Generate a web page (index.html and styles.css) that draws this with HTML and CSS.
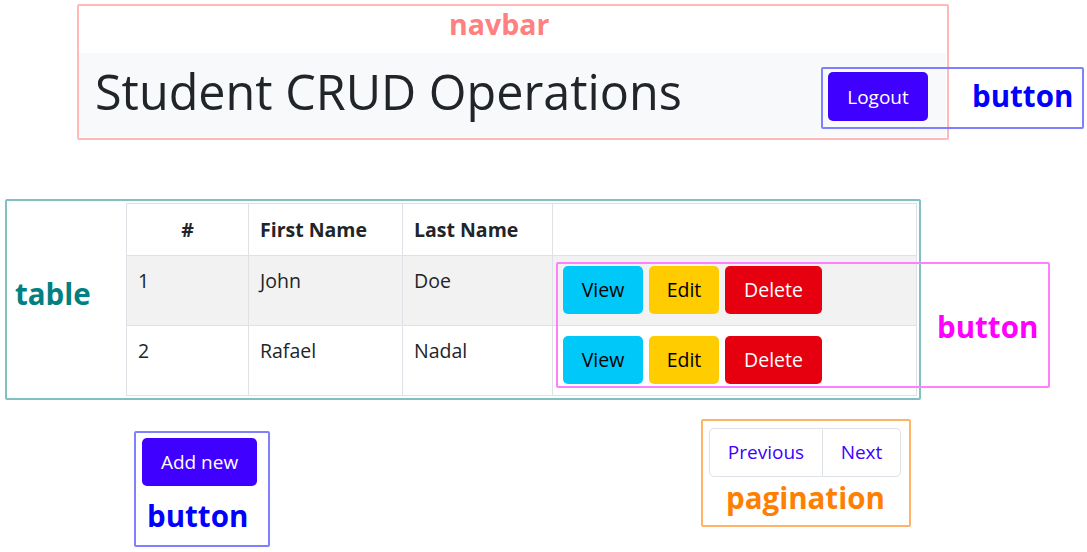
FILE: index.html
```html
<!DOCTYPE html>
<html>
<head>
<meta charset="utf-8">
<link rel="stylesheet" href="styles.css">
</head>
<body>
<div class="page">
  <header class="navbar">
    <h1 class="title">Student CRUD Operations</h1>
    <button class="btn btn-primary btn-logout">Logout</button>
  </header>

  <section class="table-wrap">
    <table class="table">
      <thead>
        <tr><th class="c-num">#</th><th class="c-first">First Name</th><th class="c-last">Last Name</th><th class="c-act"></th></tr>
      </thead>
      <tbody>
        <tr class="striped">
          <td>1</td><td>John</td><td>Doe</td>
          <td><div class="actions"><button class="btn btn-info">View</button><button class="btn btn-warning">Edit</button><button class="btn btn-danger">Delete</button></div></td>
        </tr>
        <tr>
          <td>2</td><td>Rafael</td><td>Nadal</td>
          <td><div class="actions"><button class="btn btn-info">View</button><button class="btn btn-warning">Edit</button><button class="btn btn-danger">Delete</button></div></td>
        </tr>
      </tbody>
    </table>
  </section>

  <section class="bottom">
    <button class="btn btn-primary btn-add">Add new</button>
    <nav class="pagination">
      <a class="page-link">Previous</a>
      <a class="page-link">Next</a>
    </nav>
  </section>
</div>

<div class="anno anno-navbar"><span class="anno-label lbl-navbar">navbar</span></div>
<div class="anno anno-logout"><span class="anno-label lbl-logout">button</span></div>
<div class="anno anno-table"><span class="anno-label lbl-table">table</span></div>
<div class="anno anno-actions"><span class="anno-label lbl-actions">button</span></div>
<div class="anno anno-add"><span class="anno-label lbl-add">button</span></div>
<div class="anno anno-pag"><span class="anno-label lbl-pag">pagination</span></div>
</body>
</html>
```

FILE: styles.css
```css
* { box-sizing: border-box; }
html, body { margin: 0; padding: 0; background: #fff; }
body {
  font-family: "Open Sans", "Noto Sans", "DejaVu Sans", sans-serif;
  color: #212529;
  width: 1087px;
  height: 552px;
  overflow: hidden;
  position: relative;
}
.page { padding-top: 53px; }

.navbar {
  margin-left: 79px;
  width: 867px;
  height: 84px;
  background: #f8f9fa;
  display: flex;
  align-items: center;
  justify-content: space-between;
  padding: 0 18px 0 16px;
}
.title {
  margin: 0 0 8px 0;
  font-weight: 400;
  font-size: 48.5px;
  line-height: 1.2;
  color: #212529;
}

.btn {
  font-family: inherit;
  border: none;
  border-radius: 5px;
  font-size: 19px;
  line-height: 28px;
  cursor: pointer;
  padding: 10px 0;
  text-align: center;
}
.btn-primary { background: #4000ff; color: #fff; }
.btn-logout { width: 100px; height: 49px; margin-top: 3px; }
.btn-info { background: #00c8f8; color: #000; width: 80px; }
.btn-warning { background: #ffcc00; color: #000; width: 70px; }
.btn-danger { background: #e6000f; color: #fff; width: 97px; }

.table-wrap { margin-top: 66px; margin-left: 126px; }
.table {
  width: 791px;
  border-collapse: collapse;
  font-size: 19.5px;
}
.table th, .table td {
  border: 1px solid #dee2e6;
  padding: 11px 11px;
  line-height: 28px;
  text-align: left;
  vertical-align: top;
}
.table th { font-weight: 700; height: 52px; vertical-align: middle; }
.table td { height: 70px; }
.table th.c-num { text-align: center; }
.c-num { width: 122px; }
.c-first { width: 154px; }
.c-last { width: 150px; }
.striped td { background: #f2f2f2; }
.table td:last-child { padding: 10px 10px; }
.actions { display: flex; gap: 6px; }
.actions .btn { height: 48px; font-size: 19.5px; }

.bottom {
  display: flex;
  align-items: flex-start;
  margin-top: 32px;
  padding-left: 142px;
}
.btn-add { width: 115px; height: 48px; margin-top: 10px; }
.pagination {
  margin-left: 452px;
  display: flex;
  border: 1px solid #dee2e6;
  border-radius: 5px;
  height: 49px;
}
.page-link {
  color: #4000ff;
  font-size: 19px;
  line-height: 47px;
  text-align: center;
}
.page-link:first-child { width: 113px; border-right: 1px solid #dee2e6; }
.page-link:last-child { width: 77px; }

/* annotation overlays */
.anno { position: absolute; border: 2px solid; border-radius: 2px; }
.anno-label {
  position: absolute;
  font-weight: 700;
  font-size: 29.5px;
  line-height: 1;
  white-space: nowrap;
}
.anno-navbar { left: 77px; top: 4px; width: 872px; height: 136px; border-color: rgba(255,128,128,0.55); }
.lbl-navbar { color: #ff8080; left: 370px; top: 4px; font-size: 28.5px; }
.anno-logout { left: 821px; top: 67px; width: 263px; height: 62px; border-color: #8080ff; }
.lbl-logout { color: #0000ff; left: 149px; top: 12px; }
.anno-table { left: 5px; top: 199px; width: 916px; height: 201px; border-color: #80c0c0; }
.lbl-table { color: #008080; left: 8px; top: 78px; }
.anno-actions { left: 556px; top: 262px; width: 494px; height: 126px; border-color: #ff80ff; }
.lbl-actions { color: #ff00ff; left: 379px; top: 48px; }
.anno-add { left: 134px; top: 431px; width: 136px; height: 116px; border-color: #8080ff; }
.lbl-add { color: #0000ff; left: 11px; top: 68px; }
.anno-pag { left: 701px; top: 419px; width: 210px; height: 108px; border-color: #ffb366; }
.lbl-pag { color: #ff8000; left: 23px; top: 62px; }
```
